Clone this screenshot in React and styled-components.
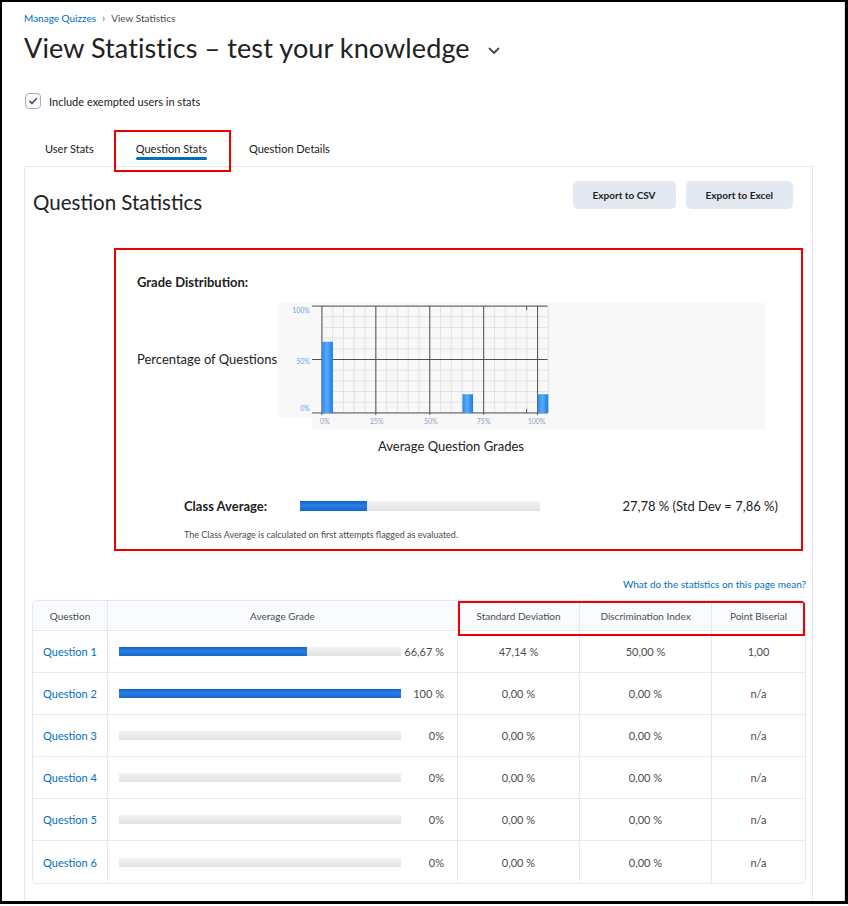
import React from 'react';
import styled, { createGlobalStyle } from 'styled-components';

const GlobalStyle = createGlobalStyle`
  html, body {
    margin: 0;
    padding: 0;
    background: #fff;
  }
  body {
    font-family: Lato, "Open Sans", "Liberation Sans", sans-serif;
    color: #202122;
  }
  * {
    box-sizing: border-box;
  }
`;

const QUESTIONS = [
  { name: 'Question 1', grade: 66.67, label: '66,67 %', std: '47,14 %', disc: '50,00 %', pb: '1,00' },
  { name: 'Question 2', grade: 100, label: '100 %', std: '0,00 %', disc: '0,00 %', pb: 'n/a' },
  { name: 'Question 3', grade: 0, label: '0%', std: '0,00 %', disc: '0,00 %', pb: 'n/a' },
  { name: 'Question 4', grade: 0, label: '0%', std: '0,00 %', disc: '0,00 %', pb: 'n/a' },
  { name: 'Question 5', grade: 0, label: '0%', std: '0,00 %', disc: '0,00 %', pb: 'n/a' },
  { name: 'Question 6', grade: 0, label: '0%', std: '0,00 %', disc: '0,00 %', pb: 'n/a' },
];

const TABS = ['User Stats', 'Question Stats', 'Question Details'];

function Chart() {
  const minorX = [...Array(22)].map((_, i) => 44 + i * 10.8);
  const minorY = [...Array(11)].map((_, i) => 3 + i * 10.7);
  const majorX = [44, 98, 152, 206, 260];
  const majorY = [3, 56.5, 110];
  const xLabels = [
    [47, '0%'],
    [99, '25%'],
    [153, '50%'],
    [206, '75%'],
    [259, '100%'],
  ];
  const yLabels = [
    [10, '100%'],
    [61, '50%'],
    [108, '0%'],
  ];
  const bars = [
    [44, 38.7, 11],
    [184.7, 91.3, 10.6],
    [260, 91.3, 10.7],
  ];
  return (
    <svg width="488" height="128" viewBox="0 0 488 128">
      <defs>
        <linearGradient id="barFill" x1="0" x2="1" y1="0" y2="0">
          <stop offset="0" stopColor="#2a88ee" />
          <stop offset="0.45" stopColor="#56acff" />
          <stop offset="1" stopColor="#1f7ae0" />
        </linearGradient>
      </defs>
      <path d="M0 0H488V127H34V114H0Z" fill="#f8f8f8" />
      {minorX.map(x => (
        <line key={'vx' + x} x1={x} x2={x} y1="3" y2="110" stroke="#e3e3e3" strokeWidth="1" />
      ))}
      {minorY.map(y => (
        <line key={'hy' + y} x1="44" x2="270" y1={y} y2={y} stroke="#e3e3e3" strokeWidth="1" />
      ))}
      {majorX.map(x => (
        <line key={'mx' + x} x1={x} x2={x} y1="3" y2="112" stroke="#505050" strokeWidth="1" />
      ))}
      {majorY.map(y => (
        <line key={'my' + y} x1="34" x2="270" y1={y} y2={y} stroke="#505050" strokeWidth="1" />
      ))}
      <line x1="249" x2="249" y1="3" y2="7" stroke="#505050" />
      <line x1="249" x2="249" y1="106" y2="110" stroke="#505050" />
      {bars.map(([x, y, w]) => (
        <rect key={'b' + x} x={x} y={y} width={w} height={110 - y} fill="url(#barFill)" />
      ))}
      {yLabels.map(([y, t]) => (
        <text key={'yl' + t} x="32" y={y} textAnchor="end" fontSize="7" fill="#6f9fee" fontFamily="Lato, sans-serif">
          {t}
        </text>
      ))}
      {xLabels.map(([x, t]) => (
        <text key={'xl' + t} x={x} y="121" textAnchor="middle" fontSize="7" fill="#8ea2bf" fontFamily="Lato, sans-serif">
          {t}
        </text>
      ))}
    </svg>
  );
}

function App() {
  return (
    <Frame>
      <GlobalStyle />
      <Page>
        <Breadcrumb>
          <Crumb href="#">Manage Quizzes</Crumb>
          <Sep>›</Sep>
          <span>View Statistics</span>
        </Breadcrumb>
        <TitleRow>
          <Title>View Statistics – test your knowledge</Title>
          <svg width="12" height="8" viewBox="0 0 12 8">
            <path d="M1.5 1.5L6 6l4.5-4.5" fill="none" stroke="#494c4e" strokeWidth="1.8" strokeLinecap="round" strokeLinejoin="round" />
          </svg>
        </TitleRow>
        <CheckRow>
          <CheckBox>
            <svg width="10" height="10" viewBox="0 0 10 10">
              <path d="M1.8 5.3l2.2 2.2 4.3-4.8" fill="none" stroke="#494c4e" strokeWidth="1.6" strokeLinecap="round" strokeLinejoin="round" />
            </svg>
          </CheckBox>
          Include exempted users in stats
        </CheckRow>
        <Tabs>
          {TABS.map(t => (
            <Tab key={t} active={t === 'Question Stats'}>
              <TabLabel active={t === 'Question Stats'}>{t}</TabLabel>
            </Tab>
          ))}
        </Tabs>
        <Panel>
          <PanelHeader>
            <Heading>Question Statistics</Heading>
            <Buttons>
              <Button>Export to CSV</Button>
              <Button>Export to Excel</Button>
            </Buttons>
          </PanelHeader>

          <Distribution>
            <SectionTitle>Grade Distribution:</SectionTitle>
            <ChartBlock>
              <ChartRow>
                <AxisLabel>Percentage of Questions</AxisLabel>
                <Chart />
              </ChartRow>
              <AxisTitle>Average Question Grades</AxisTitle>
            </ChartBlock>
            <AverageRow>
              <AverageLabel>Class Average:</AverageLabel>
              <Track width={240} height={10}>
                <Fill style={{ width: '27.78%' }} />
              </Track>
              <AverageValue>27,78 % (Std Dev = 7,86 %)</AverageValue>
            </AverageRow>
            <Note>The Class Average is calculated on first attempts flagged as evaluated.</Note>
          </Distribution>

          <HelpRow>
            <HelpLink href="#">What do the statistics on this page mean?</HelpLink>
          </HelpRow>

          <TableWrap>
            <Table>
              <colgroup>
                <col style={{ width: 75 }} />
                <col style={{ width: 350 }} />
                <col style={{ width: 122 }} />
                <col style={{ width: 132 }} />
                <col style={{ width: 93 }} />
              </colgroup>
              <thead>
                <tr>
                  <Th>Question</Th>
                  <Th>Average Grade</Th>
                  <Th>Standard Deviation</Th>
                  <Th>Discrimination Index</Th>
                  <Th>Point Biserial</Th>
                </tr>
              </thead>
              <tbody>
                {QUESTIONS.map((q, i) => (
                  <tr key={q.name}>
                    <Td last={i === QUESTIONS.length - 1}>
                      <QuestionLink href="#">{q.name}</QuestionLink>
                    </Td>
                    <Td last={i === QUESTIONS.length - 1}>
                      <GradeCell>
                        <Track height={9}>
                          <Fill style={{ width: `${q.grade}%` }} />
                        </Track>
                        <GradeValue>{q.label}</GradeValue>
                      </GradeCell>
                    </Td>
                    <Td last={i === QUESTIONS.length - 1}>{q.std}</Td>
                    <Td last={i === QUESTIONS.length - 1}>{q.disc}</Td>
                    <Td last={i === QUESTIONS.length - 1}>{q.pb}</Td>
                  </tr>
                ))}
              </tbody>
            </Table>
            <HeaderMark />
          </TableWrap>
        </Panel>
      </Page>
    </Frame>
  );
}

const Frame = styled.div`
  width: 848px;
  height: 904px;
  border-top: 2px solid #000;
  border-left: 2px solid #000;
  border-right: 3px solid #000;
  border-bottom: 3px solid #000;
  overflow: hidden;
  background: #fff;
`;

const Page = styled.div`
  padding: 9px 34px 0 22px;
  border-right: 1px solid #dcdcdc;
  height: 100%;
`;

const Breadcrumb = styled.div`
  display: flex;
  align-items: center;
  gap: 6px;
  font-size: 10px;
  line-height: 14px;
  color: #494c4e;
`;

const Crumb = styled.a`
  color: #006fbf;
  text-decoration: none;
`;

const Sep = styled.span`
  font-size: 11px;
  color: #6e7477;
`;

const TitleRow = styled.div`
  display: flex;
  align-items: center;
  gap: 18px;
  margin-top: 6px;
  height: 34px;
  svg {
    margin-top: 6px;
  }
`;

const Title = styled.h1`
  margin: 0;
  font-size: 27px;
  font-weight: 400;
  line-height: 34px;
  color: #202122;
  letter-spacing: 0.1px;
`;

const CheckRow = styled.label`
  display: flex;
  align-items: center;
  gap: 8px;
  margin-top: 27px;
  margin-left: 1px;
  height: 18px;
  font-size: 11px;
  color: #202122;
`;

const CheckBox = styled.span`
  display: flex;
  align-items: center;
  justify-content: center;
  width: 16px;
  height: 16px;
  border: 1px solid #a7adb2;
  border-radius: 4px;
  background: #f9fbff;
`;

const Tabs = styled.div`
  display: flex;
  margin-top: 20px;
  height: 36px;
  position: relative;
  z-index: 1;
`;

const Tab = styled.div`
  position: relative;
  padding: 12px 21px 0;
  font-size: 11px;
  line-height: 14px;
  color: #202122;
  &::after {
    content: '';
    display: ${p => (p.active ? 'block' : 'none')};
    position: absolute;
    left: -1px;
    right: -3px;
    top: 0;
    bottom: -6px;
    border: 2px solid #ee0000;
  }
`;

const TabLabel = styled.div`
  padding-bottom: 4px;
  &::after {
    content: '';
    display: ${p => (p.active ? 'block' : 'none')};
    height: 3px;
    margin-top: 1px;
    border-radius: 2px;
    background: #006fbf;
  }
`;

const Panel = styled.div`
  width: 789px;
  border: 1px solid #e3e9f1;
  padding: 14px 0 40px;
`;

const PanelHeader = styled.div`
  display: flex;
  justify-content: space-between;
  align-items: flex-start;
  padding: 0 19px 0 8px;
`;

const Heading = styled.h2`
  margin: 8px 0 0;
  font-size: 20.5px;
  font-weight: 400;
  line-height: 26px;
  color: #202122;
`;

const Buttons = styled.div`
  display: flex;
  gap: 10px;
`;

const Button = styled.button`
  height: 28px;
  padding: 0 20px;
  border: none;
  border-radius: 5px;
  background: #e3e9f1;
  font-family: Lato, "Liberation Sans", sans-serif;
  font-size: 10px;
  font-weight: 700;
  color: #202122;
`;

const Distribution = styled.section`
  margin: 33px 9px 0 89px;
  border: 2px solid #ee0000;
  padding: 24px 23px 8px 21px;
`;

const SectionTitle = styled.div`
  font-size: 13px;
  font-weight: 700;
  line-height: 16px;
  color: #202122;
`;

const ChartBlock = styled.div`
  width: 628px;
  margin-top: 13px;
`;

const ChartRow = styled.div`
  display: flex;
  align-items: flex-start;
  svg {
    display: block;
  }
`;

const AxisLabel = styled.div`
  width: 141px;
  margin-top: 48px;
  font-size: 13px;
  line-height: 16px;
  white-space: nowrap;
  color: #202122;
`;

const AxisTitle = styled.div`
  margin-top: 7px;
  text-align: center;
  font-size: 13px;
  line-height: 16px;
  color: #202122;
`;

const AverageRow = styled.div`
  display: flex;
  align-items: center;
  margin-top: 44px;
  padding-left: 47px;
  height: 16px;
`;

const AverageLabel = styled.div`
  width: 116px;
  font-size: 13px;
  font-weight: 700;
  color: #202122;
`;

const AverageValue = styled.div`
  flex: 1;
  text-align: right;
  font-size: 13px;
  color: #202122;
`;

const Track = styled.div`
  flex: ${p => (p.width ? `0 0 ${p.width}px` : '1')};
  height: ${p => p.height}px;
  background: linear-gradient(#f3f3f3, #e2e2e2);
  overflow: hidden;
`;

const Fill = styled.div`
  height: 100%;
  background: linear-gradient(#1262c4, #2a7fe0 45%, #1467cc);
`;

const Note = styled.div`
  margin-top: 15px;
  padding-left: 47px;
  font-size: 9px;
  line-height: 12px;
  color: #494c4e;
`;

const HelpRow = styled.div`
  display: flex;
  justify-content: flex-end;
  margin-top: 26px;
  padding-right: 6px;
`;

const HelpLink = styled.a`
  font-size: 10px;
  line-height: 14px;
  color: #006fbf;
  text-decoration: none;
`;

const TableWrap = styled.div`
  position: relative;
  margin: 9px 6px 0 7px;
  border: 1px solid #e3e9f1;
  border-radius: 5px;
  overflow: hidden;
`;

const Table = styled.table`
  width: 100%;
  table-layout: fixed;
  border-collapse: separate;
  border-spacing: 0;
  font-family: Lato, "Liberation Sans", sans-serif;
`;

const Th = styled.th`
  height: 30px;
  padding: 0;
  background: #f9fbff;
  border-bottom: 1px solid #e3e9f1;
  border-right: 1px solid #e3e9f1;
  font-size: 10px;
  font-weight: 400;
  color: #494c4e;
  text-align: center;
  &:last-child {
    border-right: none;
  }
`;

const Td = styled.td`
  height: 42px;
  padding: 0;
  border-bottom: ${p => (p.last ? 'none' : '1px solid #e3e9f1')};
  border-right: 1px solid #e3e9f1;
  font-size: 11px;
  color: #494c4e;
  text-align: center;
  &:last-child {
    border-right: none;
  }
`;

const QuestionLink = styled.a`
  color: #006fbf;
  text-decoration: none;
  font-size: 11px;
`;

const GradeCell = styled.div`
  display: flex;
  align-items: center;
  padding: 0 13px 0 11px;
`;

const GradeValue = styled.span`
  width: 43px;
  text-align: right;
  font-size: 11px;
  color: #494c4e;
`;

const HeaderMark = styled.div`
  position: absolute;
  left: 425px;
  top: 0;
  width: 347px;
  height: 35px;
  border: 2px solid #ee0000;
  pointer-events: none;
`;

export default App;
